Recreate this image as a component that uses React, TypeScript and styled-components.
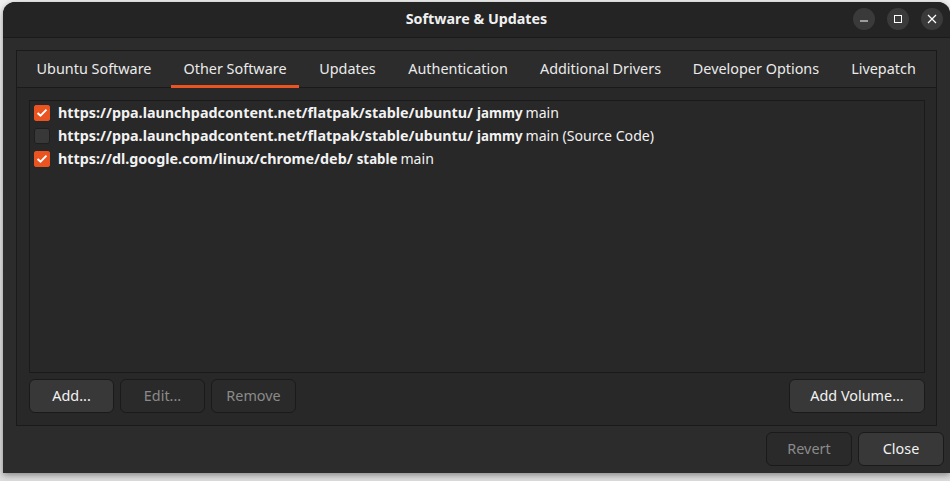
import React from "react";
import styled, { createGlobalStyle } from "styled-components";

const Global = createGlobalStyle`
  html, body { margin: 0; padding: 0; width: 950px; height: 481px; overflow: hidden; background: #e8e8e8; }
  * { box-sizing: border-box; }
`;

const Page = styled.div`
  width: 950px;
  height: 481px;
  padding: 2px 0 8px 3px;
  font-family: "Noto Sans", sans-serif;
  font-size: 14.4px;
  color: #f2f2f2;
  background: linear-gradient(#f0f0f0, #dcdcdc);
`;

const Window = styled.div`
  width: 947px;
  height: 471px;
  background: #2c2c2c;
  border-radius: 12px 12px 0 0;
  display: flex;
  flex-direction: column;
  box-shadow: 0 2px 6px rgba(0, 0, 0, 0.4);
  overflow: hidden;
`;

const TitleBar = styled.header`
  height: 36px;
  flex: none;
  position: relative;
  display: flex;
  align-items: center;
  justify-content: center;
  background: #242424;
  border-bottom: 1px solid #1a1a1a;
`;

const Title = styled.h1`
  margin: 0 0 2px 0;
  font-size: 14.3px;
  font-weight: 700;
  color: #f0f0f0;
`;

const WindowControls = styled.div`
  position: absolute;
  right: 7px;
  top: 6px;
  display: flex;
  gap: 12px;
`;

const ControlButton = styled.button`
  width: 22px;
  height: 22px;
  padding: 0;
  border: none;
  border-radius: 50%;
  background: #3a3a3a;
  display: flex;
  align-items: center;
  justify-content: center;
`;

const Body = styled.main`
  flex: 1;
  display: flex;
  flex-direction: column;
  padding: 12px 13px 0;
`;

const Notebook = styled.section`
  height: 376px;
  flex: none;
  border: 1px solid #1a1a1a;
  display: flex;
  flex-direction: column;
  background: #282828;
`;

const TabBar = styled.nav`
  height: 37px;
  flex: none;
  display: flex;
  padding: 0 4px;
  border-bottom: 1px solid #1a1a1a;
  background: #2c2c2c;
`;

const Tab = styled.div<{ $active?: boolean; $w: number }>`
  width: ${(p) => p.$w}px;
  height: 37px;
  flex: none;
  margin: 0 4px;
  display: flex;
  align-items: center;
  justify-content: center;
  white-space: nowrap;
  color: #eaeaea;
  border-bottom: 3px solid ${(p) => (p.$active ? "#e95420" : "transparent")};
`;

const Panel = styled.div`
  flex: 1;
  display: flex;
  flex-direction: column;
  padding: 12px 11px 12px 12px;
  gap: 6px;
`;

const List = styled.ul`
  flex: 1;
  margin: 0;
  padding: 0;
  list-style: none;
  border: 1px solid #1a1a1a;
  background: #282828;
`;

const Row = styled.li`
  height: 23px;
  display: flex;
  align-items: center;
  padding-left: 4px;
  white-space: nowrap;
  font-size: 14.1px;
`;

const Check = styled.span<{ $on?: boolean }>`
  width: 16px;
  height: 16px;
  flex: none;
  margin-right: 8px;
  border-radius: 3px;
  display: flex;
  background: ${(p) => (p.$on ? "#e95420" : "#383838")};
  box-shadow: inset 0 0 0 1px ${(p) => (p.$on ? "#e95420" : "#1f1f1f")};
`;

const Url = styled.b`
  font-weight: 700;
  font-size: 14.33px;
  margin-right: 4px;
`;

const Suite = styled.b`
  font-weight: 700;
  font-size: 13.3px;
  margin-right: 3px;
`;

const ButtonRow = styled.div`
  display: flex;
  gap: 6px;
`;

const Button = styled.button<{ $disabled?: boolean; $w: number; $push?: boolean }>`
  width: ${(p) => p.$w}px;
  height: 34px;
  padding: 0 0 2px;
  border-radius: 6px;
  font: inherit;
  margin-left: ${(p) => (p.$push ? "auto" : "0")};
  color: ${(p) => (p.$disabled ? "#8a8a8a" : "#f2f2f2")};
  background: ${(p) => (p.$disabled ? "#2a2a2a" : "#383838")};
  border: 1px solid #1a1a1a;
`;

const Footer = styled.footer`
  display: flex;
  justify-content: flex-end;
  gap: 6px;
  padding-top: 6px;
  margin-right: -7px;
`;

const Tick = () => (
  <svg width="16" height="16" viewBox="0 0 16 16" fill="none">
    <path d="M3.5 8 L6.5 10.6 L12.5 4.6" stroke="#fff" strokeWidth="2" />
  </svg>
);

const tabs: [string, number][] = [
  ["Ubuntu Software", 138],
  ["Other Software", 128],
  ["Updates", 81],
  ["Authentication", 124],
  ["Additional Drivers", 145],
  ["Developer Options", 150],
  ["Livepatch", 89],
];

const rows = [
  { on: true, url: "https://ppa.launchpadcontent.net/flatpak/stable/ubuntu/", suite: "jammy", rest: "main" },
  { on: false, url: "https://ppa.launchpadcontent.net/flatpak/stable/ubuntu/", suite: "jammy", rest: "main (Source Code)" },
  { on: true, url: "https://dl.google.com/linux/chrome/deb/", suite: "stable", rest: "main" },
];

export default function App() {
  return (
    <Page>
      <Global />
      <Window>
        <TitleBar>
          <Title>Software &amp; Updates</Title>
          <WindowControls>
            <ControlButton aria-label="Minimize">
              <svg width="10" height="10" viewBox="0 0 10 10"><path d="M1 7H9" stroke="#fff" strokeWidth="1.2" /></svg>
            </ControlButton>
            <ControlButton aria-label="Maximize">
              <svg width="10" height="10" viewBox="0 0 10 10" fill="none"><rect x="1.5" y="1.5" width="7" height="7" stroke="#fff" /></svg>
            </ControlButton>
            <ControlButton aria-label="Close">
              <svg width="10" height="10" viewBox="0 0 10 10"><path d="M1 1L9 9M9 1L1 9" stroke="#fff" strokeWidth="1.2" /></svg>
            </ControlButton>
          </WindowControls>
        </TitleBar>
        <Body>
          <Notebook>
            <TabBar>
              {tabs.map(([t, w], i) => (
                <Tab key={t} $active={i === 1} $w={w}>{t}</Tab>
              ))}
            </TabBar>
            <Panel>
              <List>
                {rows.map((r, i) => (
                  <Row key={i}>
                    <Check $on={r.on}>{r.on && <Tick />}</Check>
                    <Url>{r.url}</Url>
                    <Suite>{r.suite}</Suite>
                    {r.rest}
                  </Row>
                ))}
              </List>
              <ButtonRow>
                <Button $w={85}>Add...</Button>
                <Button $w={85} $disabled>Edit...</Button>
                <Button $w={85} $disabled>Remove</Button>
                <Button $w={136} $push>Add Volume...</Button>
              </ButtonRow>
            </Panel>
          </Notebook>
          <Footer>
            <Button $w={86} $disabled>Revert</Button>
            <Button $w={86}>Close</Button>
          </Footer>
        </Body>
      </Window>
    </Page>
  );
}
